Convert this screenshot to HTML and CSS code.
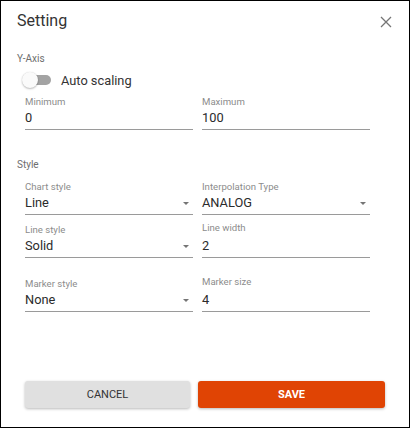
FILE: index.html
```html
<!DOCTYPE html>
<html>
<head>
<meta charset="utf-8">
<link rel="stylesheet" href="styles.css">
</head>
<body>
<div class="dialog">
  <div class="header">
    <div class="title">Setting</div>
    <svg class="close" width="12" height="12" viewBox="0 0 12 12"><path d="M1 1L11 11M11 1L1 11" stroke="#757575" stroke-width="1.3" fill="none"/></svg>
  </div>
  <div class="content">
    <div class="section-title">Y-Axis</div>
    <div class="toggle-row">
      <span class="switch"><span class="track"></span><span class="thumb"></span></span>
      <span class="toggle-label">Auto scaling</span>
    </div>
    <div class="grid">
      <div class="field"><div class="label">Minimum</div><div class="value">0</div></div>
      <div class="field"><div class="label">Maximum</div><div class="value">100</div></div>
    </div>
    <div class="section-title style-title">Style</div>
    <div class="grid">
      <div class="field select"><div class="label">Chart style</div><div class="value">Line<span class="arrow"></span></div></div>
      <div class="field select"><div class="label">Interpolation Type</div><div class="value">ANALOG<span class="arrow"></span></div></div>
    </div>
    <div class="grid row2">
      <div class="field select"><div class="label">Line style</div><div class="value">Solid<span class="arrow"></span></div></div>
      <div class="field text"><div class="label">Line width</div><div class="value">2</div></div>
    </div>
    <div class="grid row3">
      <div class="field select"><div class="label">Marker style</div><div class="value">None<span class="arrow"></span></div></div>
      <div class="field text"><div class="label">Marker size</div><div class="value">4</div></div>
    </div>
  </div>
  <div class="actions">
    <button class="btn cancel">CANCEL</button>
    <button class="btn save">SAVE</button>
  </div>
</div>
</body>
</html>
```

FILE: styles.css
```css
html, body {
  margin: 0;
  padding: 0;
  background: #fff;
}
body {
  font-family: Roboto, "Liberation Sans", sans-serif;
  color: #2b2b2b;
}
.dialog {
  box-sizing: border-box;
  width: 410px;
  height: 428px;
  border: 1px solid #000;
  display: flex;
  flex-direction: column;
  background: #fff;
}
.header {
  display: flex;
  align-items: center;
  justify-content: space-between;
  padding: 10px 16px 0 16px;
  height: 20px;
}
.title {
  font-size: 16px;
  line-height: 20px;
  color: #333;
}
.close {
  margin-top: 1px;
  margin-right: 1px;
}
.content {
  padding: 0 16px;
}
.section-title {
  font-size: 10px;
  line-height: 12px;
  color: #6e6e6e;
  margin-top: 22px;
}
.style-title {
  margin-top: 29px;
}
.toggle-row {
  display: flex;
  align-items: center;
  height: 20px;
  margin-top: 5px;
  padding-left: 5px;
}
.switch {
  position: relative;
  width: 30px;
  height: 16px;
  display: inline-block;
}
.track {
  position: absolute;
  left: 4px;
  top: 3px;
  width: 25px;
  height: 10px;
  border-radius: 5px;
  background: #a3a3a3;
}
.thumb {
  position: absolute;
  left: 0;
  top: 0;
  width: 16px;
  height: 16px;
  border-radius: 50%;
  background: #fafafa;
  box-shadow: 0 1px 2px rgba(0,0,0,0.25), 0 0 1px rgba(0,0,0,0.15);
}
.toggle-label {
  font-size: 12.8px;
  margin-left: 9px;
  color: #333;
}
.grid {
  display: grid;
  grid-template-columns: 168px 168px;
  column-gap: 9px;
  padding-left: 8px;
  margin-top: 6px;
}
.style-title + .grid {
  margin-top: 10px;
}
.row2 {
  margin-top: 9px;
}
.row3 {
  margin-top: 20px;
}
.field {
  border-bottom: 1px solid #9a9a9a;
  padding-bottom: 3px;
}
.label {
  font-size: 9.6px;
  line-height: 12px;
  color: #8c8c8c;
}
.value {
  position: relative;
  font-size: 12.8px;
  line-height: 16px;
  margin-top: 2px;
  color: #2b2b2b;
}
.text .label {
  margin-top: -2px;
}
.text .value {
  margin-top: 4px;
}
.arrow {
  position: absolute;
  right: 4px;
  top: 7px;
  width: 0;
  height: 0;
  border-left: 3px solid transparent;
  border-right: 3px solid transparent;
  border-top: 3px solid #757575;
}
.actions {
  margin-top: auto;
  display: flex;
  gap: 8px;
  padding: 0 23px 19px 24px;
}
.btn {
  border: none;
  height: 27px;
  border-radius: 3px;
  font-family: Roboto, "Liberation Sans", sans-serif;
  font-size: 11px;
  padding: 0;
  box-shadow: 0 1px 3px rgba(0,0,0,0.28);
}
.cancel {
  width: 165px;
  background: #e0e0e0;
  color: #333;
  font-weight: 400;
}
.save {
  width: 187px;
  background: #e04404;
  color: #fff;
  font-weight: 700;
}
```
